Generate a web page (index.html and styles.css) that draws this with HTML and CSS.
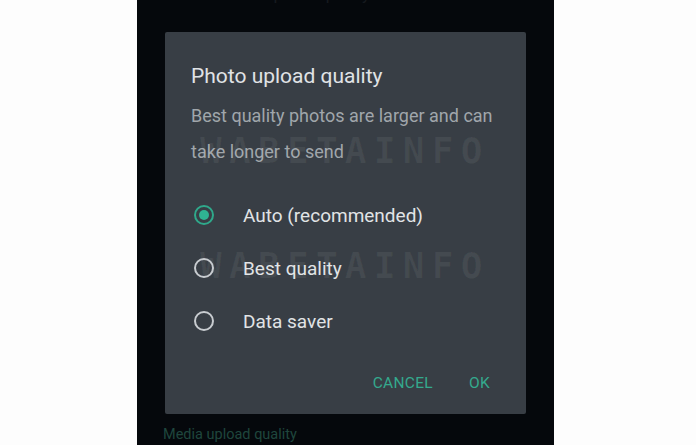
FILE: index.html
```html
<!DOCTYPE html>
<html>
<head>
<meta charset="utf-8">
<link rel="stylesheet" href="styles.css">
</head>
<body>
<div class="phone">
  <div class="behind-top"><span class="behind-top-text">Photo upload quality</span></div>
  <div class="dialog">
    <div class="watermark wm1">WABETAINFO</div>
    <div class="watermark wm2">WABETAINFO</div>
    <h1 class="title">Photo upload quality</h1>
    <p class="desc">Best quality photos are larger and can take longer to send</p>
    <div class="options">
      <div class="option"><span class="radio checked"></span><span class="label">Auto (recommended)</span></div>
      <div class="option"><span class="radio"></span><span class="label">Best quality</span></div>
      <div class="option"><span class="radio"></span><span class="label">Data saver</span></div>
    </div>
    <div class="actions">
      <span class="btn">CANCEL</span>
      <span class="btn">OK</span>
    </div>
  </div>
  <div class="behind-bottom">Media upload quality</div>
</div>
</body>
</html>
```
FILE: styles.css
```css
html, body {
  margin: 0;
  padding: 0;
  background: #fdfdfd;
  height: 445px;
  overflow: hidden;
  font-family: Roboto, "Liberation Sans", sans-serif;
}
.phone {
  margin-left: 137px;
  width: 417px;
  height: 445px;
  background: #05080c;
  box-sizing: border-box;
  padding-left: 28px;
  overflow: hidden;
}
.behind-top {
  height: 32px;
  overflow: hidden;
  padding-left: 50px;
}
.behind-top-text {
  display: block;
  margin-top: -16px;
  font-size: 17px;
  line-height: 20px;
  color: #161a1f;
}
.dialog {
  position: relative;
  width: 361px;
  height: 382px;
  background: #383e45;
  border-radius: 2px;
  box-sizing: border-box;
  padding: 0 0 0 26px;
  display: flex;
  flex-direction: column;
}
.watermark {
  position: absolute;
  left: 35px;
  font-family: "DejaVu Sans Mono", monospace;
  font-weight: bold;
  font-size: 36px;
  letter-spacing: 7.3px;
  line-height: 36px;
  color: rgba(255, 255, 255, 0.06);
  white-space: nowrap;
}
.wm1 { top: 101px; }
.wm2 { top: 216px; }
.title {
  margin: 31px 0 0 0;
  font-size: 21px;
  line-height: 26px;
  font-weight: 400;
  color: #e0e3e6;
}
.desc {
  margin: 9px 0 0 0;
  width: 320px;
  font-size: 18px;
  line-height: 36px;
  color: #a0a6ab;
}
.options {
  margin-top: 18px;
  display: flex;
  flex-direction: column;
}
.option {
  height: 53px;
  display: flex;
  align-items: center;
  padding-left: 3px;
}
.radio {
  flex: none;
  width: 20px;
  height: 20px;
  box-sizing: border-box;
  border: 2px solid #c8ccd0;
  border-radius: 50%;
  margin-right: 29px;
  position: relative;
}
.radio.checked {
  border-color: #2fa98b;
}
.radio.checked::after {
  content: "";
  position: absolute;
  left: 3px;
  top: 3px;
  width: 10px;
  height: 10px;
  border-radius: 50%;
  background: #2fb392;
}
.label {
  font-size: 19px;
  line-height: 24px;
  padding-top: 3px;
  color: #e1e4e6;
}
.actions {
  margin-top: auto;
  margin-bottom: 22px;
  display: flex;
  justify-content: flex-end;
  gap: 36px;
  padding-right: 36px;
}
.btn {
  font-size: 15.5px;
  color: #34a98d;
  letter-spacing: 0.3px;
}
.behind-bottom {
  margin-left: -2px;
  margin-top: 12px;
  font-size: 14.5px;
  color: #1f463d;
}
```
